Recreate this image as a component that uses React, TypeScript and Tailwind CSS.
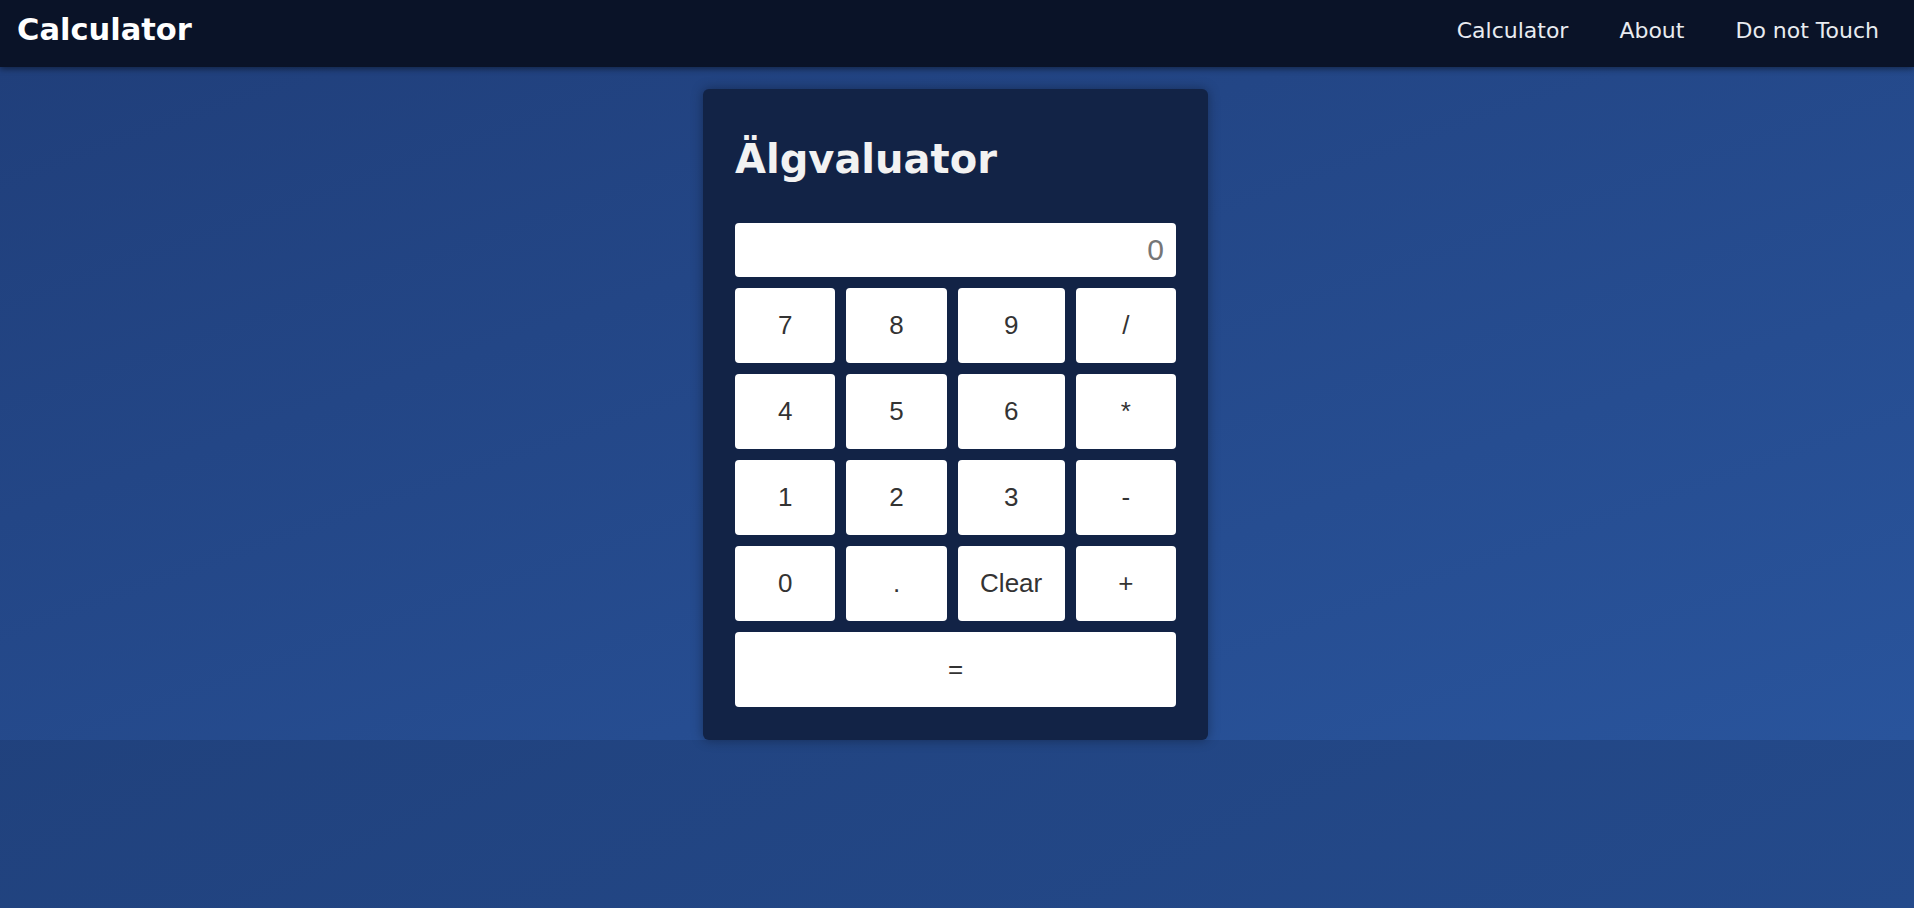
import { useState } from 'react'

const keys = ['7', '8', '9', '/', '4', '5', '6', '*', '1', '2', '3', '-', '0', '.', 'Clear', '+']

const Navbar = () => {
    return <nav className="relative z-10 flex h-[67px] items-center justify-between bg-[#0a1328] pl-[17px] pr-[35px] pb-[7px] shadow-[0_2px_6px_rgba(0,0,0,0.45)] font-['DejaVu_Sans',sans-serif]">
        <a href="#" className="text-[30.5px] font-bold text-white">Calculator</a>
        <ul className="flex gap-[51px] text-[22px] text-[#e8ebf0]">
            <li><a href="#">Calculator</a></li>
            <li><a href="#">About</a></li>
            <li><a href="#">Do not Touch</a></li>
        </ul>
    </nav>
}

const App = () => {
    const [display, setDisplay] = useState('')

    const press = (key: string) => {
        if (key === 'Clear') {
            setDisplay('')
            return
        }
        if (key === '=') {
            try {
                // eslint-disable-next-line no-new-func
                setDisplay(String(Function(`return (${display})`)()))
            } catch {
                setDisplay('Error')
            }
            return
        }
        setDisplay(display + key)
    }

    return <div className="min-h-screen bg-gradient-to-br from-[#1e3c74] to-[#244a8b]">
        <Navbar />
        <main className="flex justify-center bg-gradient-to-br from-[#203f7b] to-[#29549c] pt-[22px] pr-[3px]">
            <div className="w-[505px] rounded-md bg-[#122346] px-8 pt-8 pb-[33px] shadow-[0_0_12px_rgba(0,0,0,0.35)]">
                <h1 className="mt-[15px] mb-[41px] text-[40px] leading-[46px] font-bold text-[#f2f2f2] font-['DejaVu_Sans',sans-serif]">
                    Älgvaluator
                </h1>
                <input
                    className="mb-[11px] h-[54px] w-full rounded bg-white pr-3 text-right text-[30px] text-[#333] placeholder:text-[#767676] outline-none font-['Liberation_Sans',Arial,sans-serif]"
                    placeholder="0"
                    value={display}
                    readOnly
                    type="text"
                />
                <div className="grid grid-cols-[1fr_1fr_107px_1fr] gap-[11px] font-['Liberation_Sans',Arial,sans-serif]">
                    {keys.map((key) => (
                        <button
                            key={key}
                            onClick={() => press(key)}
                            className="h-[75px] rounded bg-white text-[26px] text-[#333]"
                        >
                            {key}
                        </button>
                    ))}
                    <button
                        onClick={() => press('=')}
                        className="col-span-4 h-[75px] rounded bg-white text-[26px] text-[#333]"
                    >
                        =
                    </button>
                </div>
            </div>
        </main>
    </div>
}

export default App
